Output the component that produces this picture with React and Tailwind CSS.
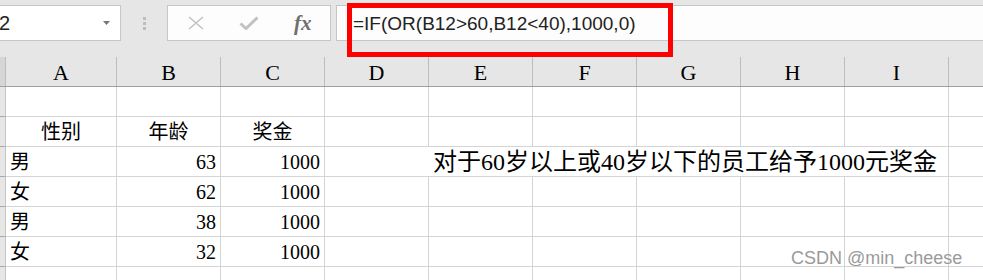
const COLS = [
  { key: "A", w: "w-[111px]" },
  { key: "B", w: "w-[104px]" },
  { key: "C", w: "w-[104px]" },
  { key: "D", w: "w-[104px]" },
  { key: "E", w: "w-[104px]" },
  { key: "F", w: "w-[104px]" },
  { key: "G", w: "w-[104px]" },
  { key: "H", w: "w-[104px]" },
  { key: "I", w: "w-[104px]" },
];

const rows = [
  { a: "男", b: "63", c: "1000", note: "对于60岁以上或40岁以下的员工给予1000元奖金" },
  { a: "女", b: "62", c: "1000" },
  { a: "男", b: "38", c: "1000" },
  { a: "女", b: "32", c: "1000" },
];

const cellFont = { fontFamily: '"Liberation Serif", "Noto Sans CJK SC", serif' };

function RowHead() {
  return <div className="w-[6px] shrink-0 bg-[#e6e6e6] border-r border-b border-r-[#c4c4c4] border-b-[#a8a8a8]" />;
}

function Cell({ w, children, align = "left", last = false }) {
  return (
    <div
      className={`${w} shrink-0 h-full border-b border-[#d4d4d4] flex items-center px-[4px] whitespace-nowrap ${
        last ? "" : "border-r"
      } ${align === "right" ? "justify-end" : align === "center" ? "justify-center" : "justify-start"}`}
    >
      {children}
    </div>
  );
}

function EmptyRow() {
  return (
    <div className="flex h-[30px]">
      <RowHead />
      {COLS.map((c) => (
        <Cell key={c.key} w={c.w} />
      ))}
      <div className="flex-1 border-b border-[#d4d4d4]" />
    </div>
  );
}

export default function App() {
  return (
    <div
      className="relative w-[983px] h-[280px] overflow-hidden bg-[#e6e6e6] text-black"
      style={{ fontFamily: '"Liberation Sans", Arial, sans-serif' }}
    >
      {/* toolbar: name box, grip, buttons, formula input */}
      <div className="flex items-start h-[57px] pt-[5px]">
        <div className="w-[121px] h-[36px] bg-white border border-l-0 border-[#c6c6c6] flex items-center justify-between pr-[10px]">
          <span className="text-[20px] leading-none text-[#222] -ml-[1px]">2</span>
          <svg width="7" height="4" viewBox="0 0 7 4">
            <path d="M0 0h7L3.5 4z" fill="#777" />
          </svg>
        </div>
        <div className="w-[46px] h-[36px] flex flex-col items-center justify-center gap-[2px]">
          <div className="w-[3px] h-[3px] bg-[#bdbdbd]" />
          <div className="w-[3px] h-[3px] bg-[#bdbdbd]" />
          <div className="w-[3px] h-[3px] bg-[#bdbdbd]" />
        </div>
        <div className="w-[164px] h-[36px] bg-[#fdfdfd] border border-[#c6c6c6] flex items-center">
          <svg className="ml-[19px]" width="18" height="14" viewBox="0 0 18 14">
            <path d="M2 1l14 12M16 1L2 13" stroke="#c2c2c2" strokeWidth="1.6" fill="none" />
          </svg>
          <svg className="ml-[34px]" width="20" height="14" viewBox="0 0 20 14">
            <path d="M1.5 7.5l5.5 5L18.5 1.5" stroke="#c2c2c2" strokeWidth="3" fill="none" />
          </svg>
          <span
            className="ml-[35px] text-[21px] leading-none italic font-bold text-[#6f6f6f]"
            style={{ fontFamily: '"Liberation Serif", serif' }}
          >
            fx
          </span>
        </div>
        <div className="ml-[5px] flex-1 h-[36px] bg-[#fdfdfd] border border-r-0 border-[#c6c6c6] flex items-center pl-[16px]">
          <span className="text-[19px] leading-none text-[#222]">=IF(OR(B12&gt;60,B12&lt;40),1000,0)</span>
        </div>
      </div>

      {/* column headers */}
      <div className="flex h-[30px] bg-[#e6e6e6] border-b border-[#9f9f9f]" style={cellFont}>
        <div className="w-[6px] shrink-0 border-r border-[#bdbdbd] bg-[#d6d6d6]" />
        {COLS.map((c) => (
          <div
            key={c.key}
            className={`${c.w} shrink-0 border-r border-[#bdbdbd] flex items-center justify-center text-[22px] leading-none pt-[2px]`}
          >
            {c.key}
          </div>
        ))}
        <div className="flex-1" />
      </div>

      {/* sheet body */}
      <div className="bg-white text-[20px] leading-none" style={cellFont}>
        <EmptyRow />
        <div className="flex h-[30px]">
          <RowHead />
          <Cell w="w-[111px]" align="center">性别</Cell>
          <Cell w="w-[104px]" align="center">年龄</Cell>
          <Cell w="w-[104px]" align="center">奖金</Cell>
          {COLS.slice(3).map((c) => (
            <Cell key={c.key} w={c.w} />
          ))}
          <div className="flex-1 border-b border-[#d4d4d4]" />
        </div>
        {rows.map((r, i) => (
          <div key={i} className="flex h-[30px]">
            <RowHead />
            <Cell w="w-[111px]">{r.a}</Cell>
            <Cell w="w-[104px]" align="right">{r.b}</Cell>
            <Cell w="w-[104px]" align="right">{r.c}</Cell>
            {r.note ? (
              <div className="w-[624px] shrink-0 h-full border-b border-r border-[#d4d4d4] flex items-center pl-[108px] whitespace-nowrap text-[24px]">
                {r.note}
              </div>
            ) : (
              COLS.slice(3).map((c) => <Cell key={c.key} w={c.w} />)
            )}
            <div className="flex-1 border-b border-[#d4d4d4]" />
          </div>
        ))}
        <EmptyRow />
      </div>

      {/* overlays */}
      <div className="absolute left-[347px] top-[3px] w-[326px] h-[54px] border-[5px] border-[#ff0000]" />
      <div
        className="absolute left-[791px] top-[249px] text-[18px] leading-none text-[#9a9a9a]"
        style={{ textShadow: "0 0 1px #fff" }}
      >
        CSDN @min_cheese
      </div>
    </div>
  );
}
